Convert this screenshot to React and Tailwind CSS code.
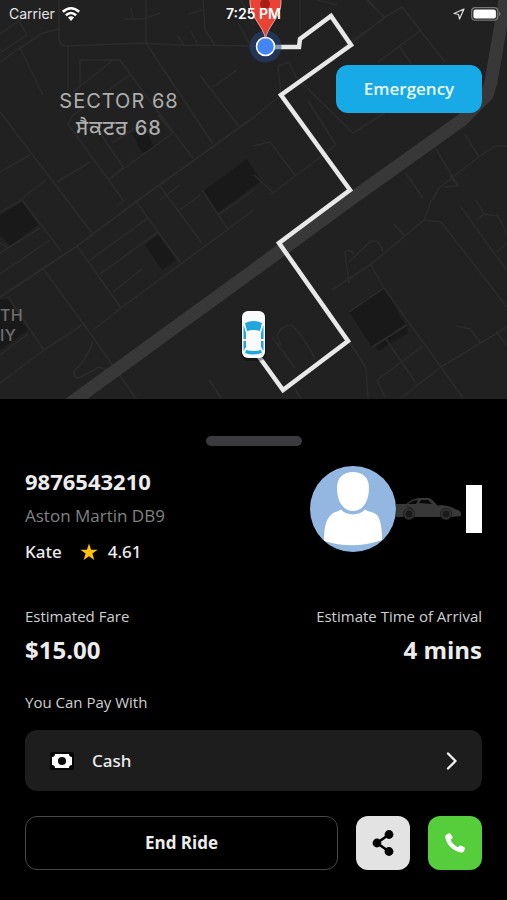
import React from "react";

const minorRoads = [
  "M59 0V40Q60 45 66 46L143 43L180 45L254 46H290",
  "M146 0V43L213 144",
  "M0 62L20 48L43 33L59 29M20 48L43 95M0 53L27 35L15 15M0 34L22 19",
  "M68 46V90M80 87V60H120L147 97L193 158M113 60L73 92",
  "M130 75L72 116L68 124L123 200M100 133L123 167M112 143L135 128",
  "M0 172L30 155M20 200L46 180M57 182L90 162M108 180L173 133",
  "M124 167L108 180M158 115L173 133",
  "M200 75L240 128M213 87L237 70",
  "M124 19H143L160 13M131 8L133 19M203 0L205 30L215 45M238 23L250 45M178 36L184 45M191 31L197 43M188 14L202 10",
  "M0 112L67 200L92 233M159 185L202 243M135 200L180 262M180 210L200 195M202 190L227 228",
  "M0 212L22 200L62 252M0 253L40 228M0 274L50 240M0 243L8 248",
  "M77 246L121 308M90 260L148 218M100 274L158 232M113 292L142 269M93 330L121 308L254 210",
  "M44 270L88 330L137 400M8 297L44 350L82 325M0 383L44 350M0 355L28 334",
  "M93 341Q88 358 74 371Q73 378 79 378L99 367L112 372M209 380L221 398",
  "M117 206L125 200M218 215L254 190",
  "M300 0V32M317 0L337 5M366 0L385 17L352 43M385 17L402 7L445 62M368 0L385 18M341 48L385 18",
  "M378 62L421 30M400 47L412 65M278 66L289 62L296 77L353 133L421 90M278 66L281 95L254 117",
  "M254 146L270 142L295 175M254 175L274 193M308 101L336 145M270 195L336 145",
  "M436 149L458 186M465 135L479 157M405 172L423 198M432 200L440 187L479 157L495 146H507M444 187L458 186L450 176",
  "M431 200Q429 210 424 220L405 236L370 265L332 290M349 283L345 252Q349 248 354 254M349 262L371 241Q379 239 383 252M394 224L404 235",
  "M424 220L441 222L507 307M371 265L384 288L441 367L463 398M349 312L384 288M461 207L507 271M476 200L484 214L476 221M484 214L498 216L507 234M497 252L507 243",
  "M401 398L441 367L507 327M456 326L470 329L480 342M498 334L507 345",
  "M386 339L416 383M372 347L407 325M377 380L423 346M377 380L385 398",
  "M272 337L295 368M281 346L277 336Q280 326 291 325Q297 327 315 358M349 341L366 368L368 399M295 389L301 399",
  "M241 0L254 25M160 200L180 185",
];

const blocks = [
  "M132 133L142 153L154 147L146 131Z",
  "M202 192L247 159L261 181L217 213Z",
  "M0 215L22 202L38 225L10 246L0 235Z",
  "M145 245L158 235L176 260L162 270Z",
  "M0 300L8 299L28 330L0 350Z",
  "M349 312L384 288L405 324L372 347Z",
  "M386 339L407 326L408 333L378 351L376 347Z",
];

function RideMap() {
  return (
    <svg
      className="block h-full w-full"
      viewBox="0 0 507 399"
      preserveAspectRatio="xMidYMid slice"
      role="img"
      aria-label="Route map"
    >
      <rect width="507" height="399" fill="#212121" />
      <g fill="#191919">
        {blocks.map((d) => (
          <path key={d} d={d} />
        ))}
      </g>
      <g fill="none" stroke="#2b2b2b" strokeWidth="1.5" strokeLinejoin="round">
        {minorRoads.map((d) => (
          <path key={d} d={d} />
        ))}
        <path
          d="M0 297L77 246L133 204L254 117"
          strokeWidth="2"
        />
      </g>
      <path
        d="M68 405L254 270L350 200L462 120L487 95L491 82L505 0"
        fill="none"
        stroke="#383838"
        strokeWidth="13"
        strokeLinejoin="round"
      />
      <path
        d="M266 47H299L300 39L331 16L351 45L281 95L350 190L279 243L348 341L283 390L257 354"
        fill="none"
        stroke="#e8e8e8"
        strokeWidth="4.500"
      />
      <circle cx="265.500" cy="46.500" r="16" fill="#25478a" fillOpacity="0.5" />
      <circle cx="265.500" cy="46.500" r="9" fill="#4285f4" stroke="#fff" strokeWidth="1.500" />
      <path
        d="M265.500 39C264 27 250 17 250 3V-12H281V3C281 17 267 27 265.500 39Z"
        fill="#ea4335"
        stroke="#f6d7d3"
        strokeWidth="0.700"
      />
      <circle cx="265" cy="4" r="5" fill="#a51f16" />
      <g>
        <rect x="241" y="312" width="25" height="49" rx="7" fill="#000" opacity="0.35" />
        <rect x="242" y="311" width="23" height="47" rx="6" fill="#f8fafb" />
        <path d="M245 323Q253.500 319 262 323L260 331Q253.500 329 247 331Z" fill="#20a5dc" />
        <path d="M243.500 325L246 333V339H243.500ZM263.500 325L261 333V339H263.500ZM243.500 341H246V347L243.500 351ZM263.500 341H261V347L263.500 351Z" fill="#20a5dc" />
        <path d="M246 350Q253.500 352 261 350L262 353Q253.500 356 245 353Z" fill="#20a5dc" />
      </g>
    </svg>
  );
}

function WifiIcon() {
  return (
    <svg className="h-4 w-5" viewBox="0 0 20 16" aria-hidden="true">
      <g fill="none" stroke="#fff" strokeWidth="2.600">
        <path d="M1.800 5.700Q10 -1.200 18.200 5.700" />
        <path d="M4.900 9.200Q10 4.800 15.100 9.200" />
      </g>
      <path d="M7 11.500Q10 9 13 11.500L10 15Z" fill="#fff" />
    </svg>
  );
}

function StatusBar() {
  return (
    <div className="absolute inset-x-0 top-0 flex h-7 items-center justify-between px-2 font-['Inter','Liberation_Sans',sans-serif] text-sm text-white">
      <div className="flex items-center gap-1.5 pl-px text-[#e4e4e4]">
        <span>Carrier</span>
        <WifiIcon />
      </div>
      <span className="absolute left-1/2 -translate-x-1/2 font-semibold">7:25 PM</span>
      <div className="flex items-center gap-1.5">
        <svg className="h-3 w-3" viewBox="0 0 12 12" aria-hidden="true">
          <path d="M11 1L1 5.500L5.500 6.500L6.500 11Z" fill="none" stroke="#ddd" strokeWidth="1.200" strokeLinejoin="round" />
        </svg>
        <svg className="-mr-1 h-3.5 w-8" viewBox="0 0 32 14" aria-hidden="true">
          <rect x="0.700" y="0.700" width="26" height="12.500" rx="3.500" fill="none" stroke="#777" strokeWidth="1.200" />
          <rect x="2.400" y="2.500" width="22.500" height="9" rx="2" fill="#fff" />
          <path d="M28 4.800Q31 7 28 9.200Z" fill="#777" />
        </svg>
      </div>
    </div>
  );
}

function Avatar() {
  return (
    <svg className="h-[86px] w-[86px]" viewBox="0 0 86 86" role="img" aria-label="Kate">
      <defs>
        <clipPath id="avatar-disc">
          <circle cx="43" cy="43" r="43" />
        </clipPath>
      </defs>
      <g clipPath="url(#avatar-disc)">
        <rect width="86" height="86" fill="#93b7e0" />
        <path d="M43 6C52 6 59 11 59 22C59 35 53 45 43 45C33 45 27 35 27 22C27 11 34 6 43 6Z" fill="#fff" />
        <path d="M14 75C14 62 16 53 21 49C23 46 28 46 31 43.500C37 50 49 50 55 43.500C58 46 64 46 67 49C71 54 72 63 72 74Q43 84 14 75Z" fill="#fff" />
      </g>
    </svg>
  );
}

function CarSilhouette() {
  return (
    <svg className="h-6 w-[66px]" viewBox="0 0 66 24" role="img" aria-label="Car">
      <path d="M0 7H4L10 7Q17 1 24 1H33Q36 2 41 8Q53 8 59 12Q64 13 65 16V19L56 20H0Z" fill="#383838" />
      <path d="M12 7Q17 3 22 3L20 7ZM23 6L25 3H32L36 7Z" fill="#080808" />
      <path d="M11 9L17 12M40 8L44 9" stroke="#222" fill="none" />
      {[13, 50].map((x) => (
        <g key={x}>
          <circle cx={x} cy="17" r="6" fill="#202020" />
          <circle cx={x} cy="17" r="5" fill="#343434" />
          <circle cx={x} cy="17" r="3.500" fill="#191919" />
        </g>
      ))}
    </svg>
  );
}

function DriverSummary() {
  return (
    <section className="mt-5 flex items-start justify-between">
      <div>
        <h1 className="text-[22px] leading-[30px] font-bold">9876543210</h1>
        <p className="mt-1 text-[17px] leading-8 text-[#828282]">Aston Martin DB9</p>
        <div className="mt-1 flex h-8 items-center font-['Noto_Sans',sans-serif] text-[17px] font-medium">
          <span>Kate</span>
          <svg className="mr-2.5 ml-[18px] h-[18px] w-[18px]" viewBox="0 0 18 18" aria-hidden="true">
            <path d="M9 0.500L11.100 6.700H17.600L12.400 10.600L14.300 17L9 13.200L3.700 17L5.600 10.600L0.400 6.700H6.900Z" fill="#ffc107" />
          </svg>
          <span>4.61</span>
        </div>
      </div>
      <div className="flex items-center">
        <Avatar />
        <CarSilhouette />
        <div className="ml-1 h-12 w-4 bg-white" />
      </div>
    </section>
  );
}

const labelClass = "text-[15px] leading-6 text-[#d0d0d0]";

function TripEstimates() {
  return (
    <dl className="mt-9 flex justify-between">
      <div>
        <dt className={labelClass}>Estimated Fare</dt>
        <dd className="mt-1.5 text-2xl font-bold">$15.00</dd>
      </div>
      <div className="text-right">
        <dt className={labelClass}>Estimate Time of Arrival</dt>
        <dd className="mt-1.5 text-2xl font-bold">4 mins</dd>
      </div>
    </dl>
  );
}

function PaymentMethod() {
  return (
    <section className="mt-6">
      <h2 className={labelClass}>You Can Pay With</h2>
      <button type="button" className="mt-4 flex h-[61px] w-full items-center rounded-xl bg-[#1d1d1d] pr-6 pl-[25px] font-['Noto_Sans',sans-serif] text-[17px] font-medium">
        <svg className="h-[18px] w-6" viewBox="0 0 24 18" aria-hidden="true">
          <rect width="24" height="18" rx="2" fill="#050505" />
          <path d="M5 2H19Q19 5 22 5V13Q19 13 19 16H5Q5 13 2 13V5Q5 5 5 2Z" fill="#fff" />
          <circle cx="12" cy="9" r="4" fill="#080808" />
        </svg>
        <span className="ml-[18px]">Cash</span>
        <svg className="ml-auto h-5 w-3" viewBox="0 0 12 20" aria-hidden="true">
          <path d="M2 2.500L9.500 10L2 17.500" fill="none" stroke="#f1f1f1" strokeWidth="2.400" strokeLinecap="round" strokeLinejoin="round" />
        </svg>
      </button>
    </section>
  );
}

function RideActions() {
  return (
    <div className="mt-[25px] flex gap-[18px]">
      <button type="button" className="h-[54px] flex-1 rounded-xl border border-[#484848] text-[17px] font-bold">
        End Ride
      </button>
      <button type="button" aria-label="Share ride" className="flex h-[54px] w-[54px] items-center justify-center rounded-xl bg-[#e3e3e3]">
        <svg className="h-7 w-6" viewBox="0 0 24 28" aria-hidden="true">
          <path d="M18 5.500L6 14L18 22.500" fill="none" stroke="#000" strokeWidth="2.600" />
          <circle cx="18" cy="5.500" r="4.400" />
          <circle cx="6" cy="14" r="4.400" />
          <circle cx="18" cy="22.500" r="4.400" />
        </svg>
      </button>
      <button type="button" aria-label="Call driver" className="flex h-[54px] w-[54px] items-center justify-center rounded-xl bg-[#56ce3c]">
        <svg className="h-5 w-5" viewBox="0 0 20 20" aria-hidden="true">
          <path d="M1.500 1.500L3.800 0.300Q4.900 0 5.700 1L7.400 3.800Q7.900 5 6.900 5.700L5.500 6.800Q7.600 11.600 12.900 14.300L14.300 13Q15 12.400 16 12.700L19 13.900Q20.300 14.600 19.900 16L18.900 18.200Q18 19.800 15.900 19.500C8 18.200 1.500 12 0.300 4.300Q0 2.400 1.500 1.500Z" fill="#fff" />
        </svg>
      </button>
    </div>
  );
}

export default function App() {
  return (
    <main className="min-h-screen bg-black font-['Open_Sans','Noto_Sans',sans-serif] text-[#ececec]">
      <div className="relative h-[399px] overflow-hidden">
        <RideMap />
        <div className="absolute top-[88px] left-[119px] -translate-x-1/2 text-center font-['Inter','Noto_Sans_Gurmukhi','Noto_Sans',sans-serif] text-xl leading-[27px] tracking-[1px] whitespace-nowrap text-[#adadad]">
          <p>SECTOR 68</p>
          <p className="font-medium">ਸੈਕਟਰ 68</p>
        </div>
        <div className="absolute top-[305px] left-0 font-['Inter',sans-serif] text-base leading-5 font-medium tracking-wide text-[#707070]">
          <p>TH</p>
          <p>IY</p>
        </div>
        <StatusBar />
        <button type="button" className="absolute top-[65px] right-[25px] h-12 w-[146px] rounded-xl bg-[#18aae7] text-[17px] font-semibold text-[#e8f8ff]">
          Emergency
        </button>
      </div>
      <div className="px-[25px] pt-[37px] pb-7">
        <div className="mx-auto h-2.5 w-24 rounded-full bg-[#3b3b3d]" />
        <DriverSummary />
        <TripEstimates />
        <PaymentMethod />
        <RideActions />
      </div>
    </main>
  );
}
